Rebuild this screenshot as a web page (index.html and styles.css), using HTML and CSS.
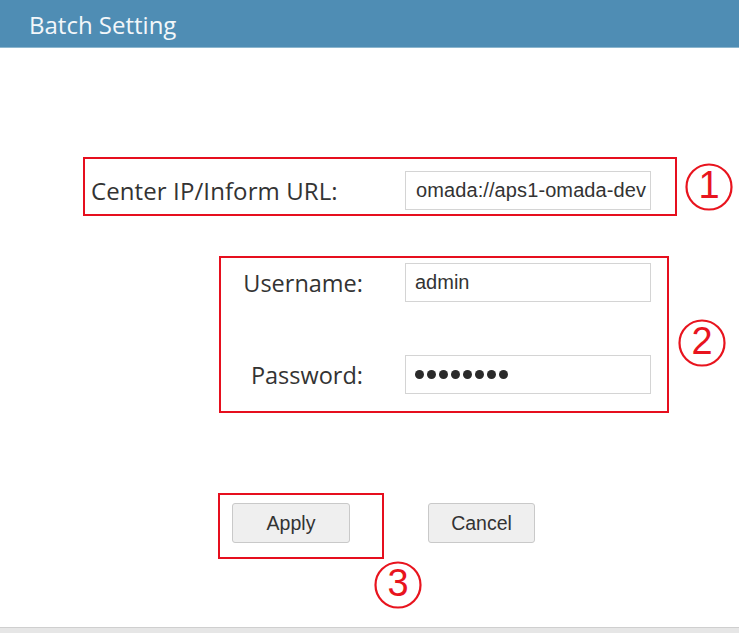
FILE: index.html
```html
<!DOCTYPE html>
<html lang="en">
<head>
<meta charset="utf-8">
<title>Batch Setting</title>
<link rel="stylesheet" href="styles.css">
</head>
<body>
<div class="page">
  <header class="titlebar">Batch Setting</header>
  <main class="content">
    <div class="row row-url">
      <div class="mark mark-url">
        <span class="lbl lbl-url">Center IP/Inform URL:</span>
        <div class="field">omada://aps1-omada-dev</div>
      </div>
      <svg class="num num-1" viewBox="0 0 48 48" width="48" height="48"><circle cx="24" cy="24" r="22.5"/><text x="24" y="35">1</text></svg>
    </div>

    <div class="row row-cred">
      <div class="mark mark-cred">
        <span class="lbl lbl-right">Username:</span>
        <div class="field">admin</div>
        <span class="lbl lbl-right">Password:</span>
        <div class="field dots"><i></i><i></i><i></i><i></i><i></i><i></i><i></i><i></i></div>
      </div>
      <svg class="num num-2" viewBox="0 0 48 48" width="48" height="48"><circle cx="24" cy="24" r="22.5"/><text x="24" y="35">2</text></svg>
    </div>

    <div class="row row-btn">
      <div class="mark mark-btn">
        <button class="btn btn-apply" type="button">Apply</button>
      </div>
      <button class="btn btn-cancel" type="button">Cancel</button>
    </div>

    <div class="row row-num3">
      <svg class="num num-3" viewBox="0 0 48 48" width="48" height="48"><circle cx="24" cy="24" r="22.5"/><text x="24" y="35">3</text></svg>
    </div>
  </main>
  <footer class="footbar"></footer>
</div>
</body>
</html>
```

FILE: styles.css
```css
* { box-sizing: border-box; }

html, body {
  margin: 0;
  padding: 0;
  background: #ffffff;
}

.page {
  width: 739px;
  height: 633px;
  display: flex;
  flex-direction: column;
  overflow: hidden;
  font-family: "Open Sans", "Noto Sans", sans-serif;
  color: #333333;
}

.titlebar {
  height: 48px;
  flex: none;
  background: #4f8db4;
  border-bottom: 1px solid #8cb6ce;
  color: #f3f7fa;
  font-size: 24px;
  line-height: 49px;
  padding-left: 29px;
}

.content {
  flex: 1;
  display: flex;
  flex-direction: column;
}

.row {
  display: flex;
  align-items: flex-start;
}

.mark {
  border: 2px solid #e60f1e;
}

.lbl {
  font-size: 23.5px;
  color: #333333;
  white-space: nowrap;
}

.lbl-url {
  font-size: 24px;
  letter-spacing: 0.1px;
}

.field {
  width: 246px;
  height: 39px;
  border: 1px solid #d4d4d4;
  background: #ffffff;
  font-family: "Liberation Sans", Arial, sans-serif;
  font-size: 20px;
  color: #333333;
  line-height: 37px;
  padding-left: 9px;
  white-space: nowrap;
  overflow: hidden;
}

/* row 1 */
.row-url {
  margin-top: 109px;
  align-items: center;
}

.mark-url {
  margin-left: 83px;
  width: 594px;
  height: 59px;
  display: flex;
  align-items: center;
  padding: 8px 24px 0 6px;
}

.mark-url .field {
  margin-left: auto;
  padding-left: 10px;
  padding-right: 0;
  letter-spacing: 0.1px;
}

/* numbered annotations */
.num {
  flex: none;
  display: block;
}

.num circle {
  fill: none;
  stroke: #e8141e;
  stroke-width: 2.2;
}

.num text {
  fill: #e8141e;
  font-family: "Liberation Sans", Arial, sans-serif;
  font-size: 38px;
  text-anchor: middle;
}

.num-1 { margin-left: 8px; }

/* row 2 */
.row-cred { margin-top: 40px; }

.mark-cred {
  margin-left: 219px;
  width: 450px;
  height: 157px;
  display: grid;
  grid-template-columns: 184px 246px;
  grid-template-rows: 39px 39px;
  row-gap: 53px;
  align-items: center;
  padding: 5px 16px 17px 0;
}

.lbl-right {
  text-align: right;
  padding-right: 42px;
}

.dots {
  display: flex;
  align-items: center;
  gap: 3px;
  padding-left: 9px;
}

.dots i {
  display: block;
  width: 9px;
  height: 9px;
  border-radius: 50%;
  background: #2a2a2a;
}

.num-2 {
  margin-left: 9px;
  margin-top: 63px;
}

/* row 3 */
.row-btn { margin-top: 80px; }

.mark-btn {
  margin-left: 218px;
  width: 166px;
  height: 66px;
  padding: 8px 0 0 12px;
}

.btn {
  display: block;
  height: 40px;
  margin: 0;
  padding: 0;
  background: #efefef;
  border: 1px solid #c9c9c9;
  border-radius: 3px;
  font-family: "Liberation Sans", Arial, sans-serif;
  font-size: 19.5px;
  color: #333333;
}

.btn-apply { width: 118px; }

.btn-cancel {
  width: 107px;
  margin-left: 44px;
  margin-top: 10px;
}

.row-num3 {
  margin-top: 2px;
  padding-left: 374px;
}

/* bottom edge */
.footbar {
  flex: none;
  height: 6px;
  background: #e6e6e6;
  border-top: 1px solid #cfcfcf;
}
```
